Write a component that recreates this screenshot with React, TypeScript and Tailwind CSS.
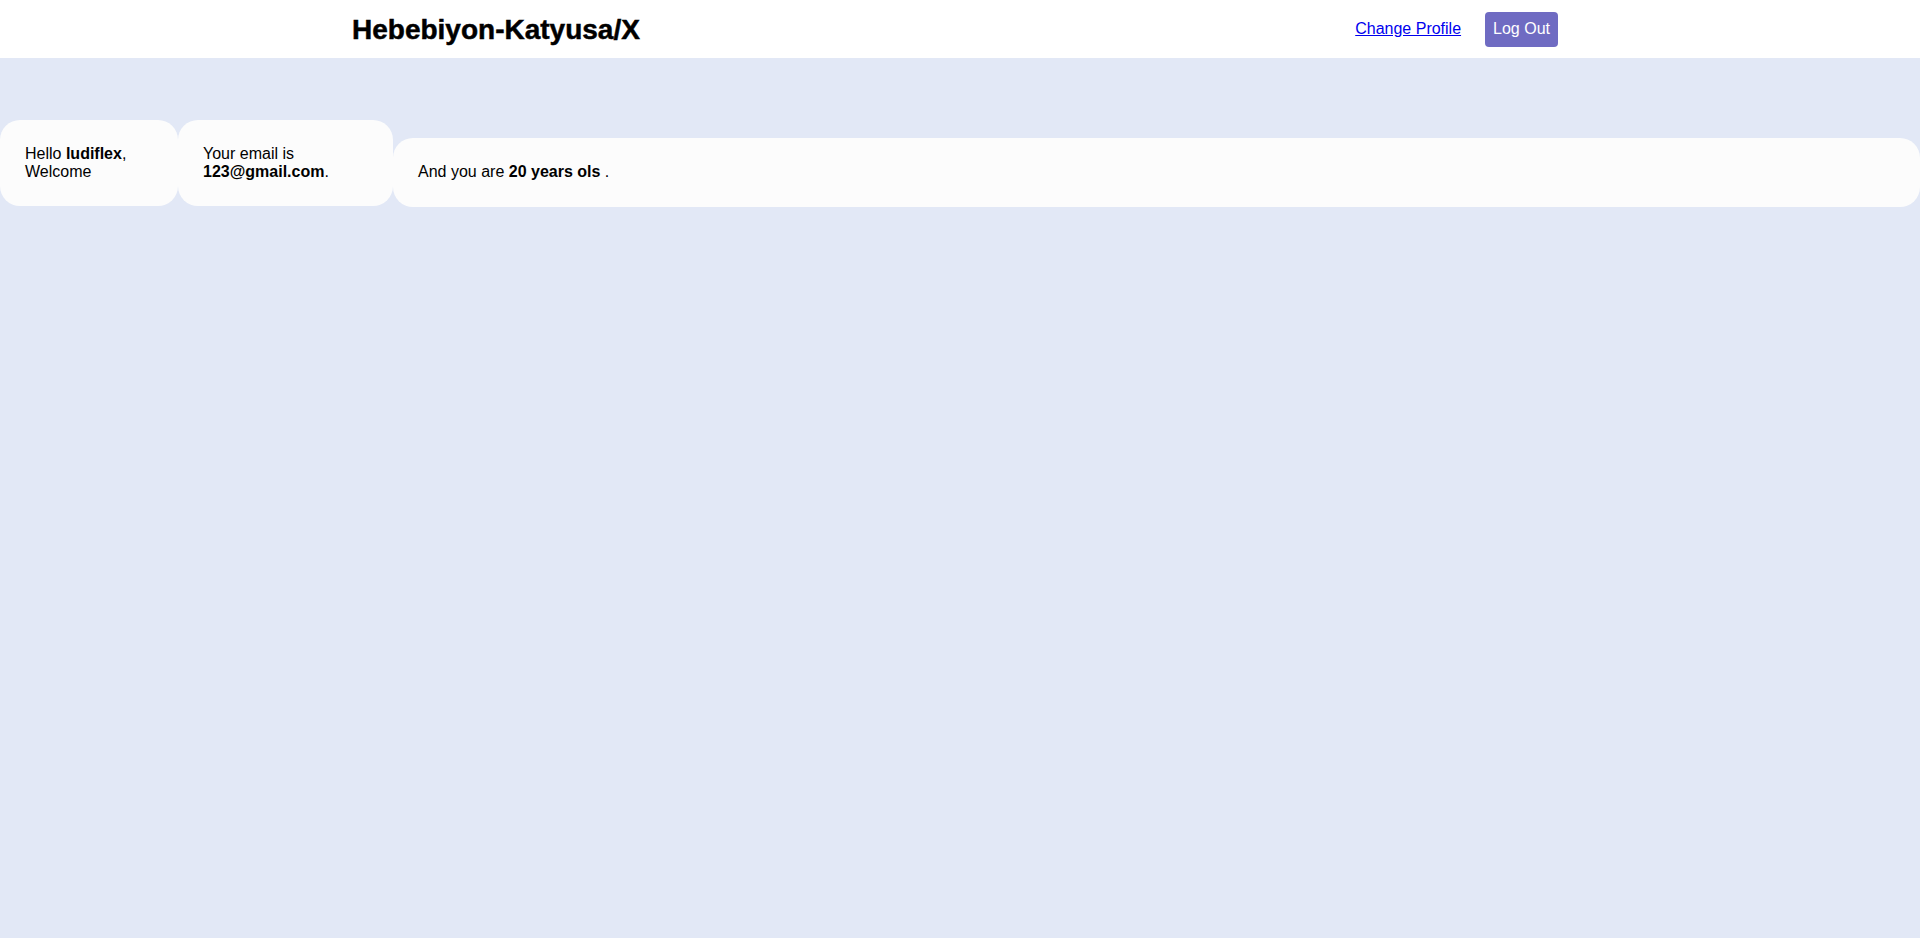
import React from 'react';

const App = () => {
  const user = { name: 'ludiflex', email: '123@gmail.com', age: 20 };

  return (
    <div className="min-h-[938px] bg-[#e2e8f6] font-['Liberation_Sans',Arial,sans-serif] text-base text-black">
      {/* Top bar */}
      <header className="h-[58px] bg-white flex items-center justify-between pl-[352px] pr-[362px]">
        <h1 className="text-[28px] font-bold leading-none pt-[2px] [-webkit-text-stroke:0.5px_black]">Hebebiyon-Katyusa/X</h1>
        <div className="flex items-center gap-6">
          <a href="#" className="text-[#0000ee] underline">Change Profile</a>
          <button className="h-[35px] px-[8px] rounded bg-[#6f6bc2] text-white">Log Out</button>
        </div>
      </header>

      {/* Info cards */}
      <div className="flex items-end mt-[62px] leading-[1.15]">
        <div className="w-[178px] mb-px bg-[#fcfcfc] rounded-[20px] px-[25px] pt-[25px] pb-[24px]">
          Hello <b>{user.name}</b>,<br />Welcome
        </div>
        <div className="w-[215px] mb-px bg-[#fcfcfc] rounded-[20px] px-[25px] pt-[25px] pb-[24px]">
          Your email is <br /><b>{user.email}</b>.
        </div>
        <div className="flex-1 bg-[#fcfcfc] rounded-[20px] p-[25px]">
          And you are <b>{user.age} years ols</b> .
        </div>
      </div>
    </div>
  );
};

export default App;
